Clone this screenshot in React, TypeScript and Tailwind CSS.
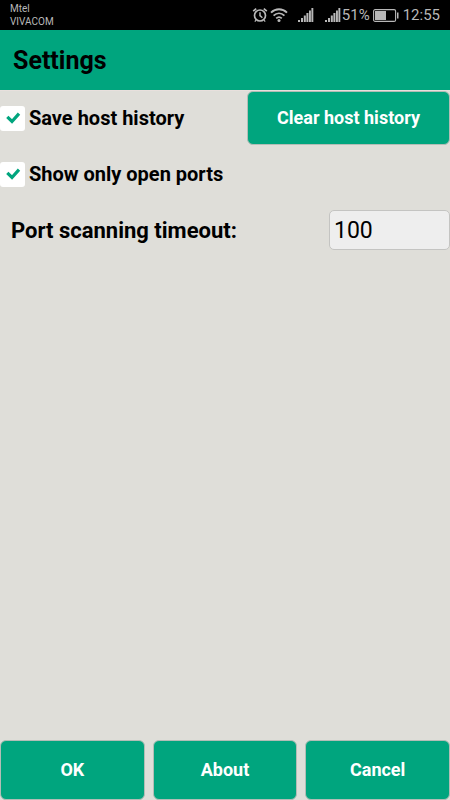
import { useState } from "react";

function AlarmIcon() {
  return (
    <svg width="16" height="16" viewBox="0 0 16 16" fill="none" stroke="#b8b8b8" aria-hidden="true">
      <circle cx="8" cy="8.5" r="5.5" strokeWidth="1.7" />
      <path d="M8 5.2v3.400l2.400 2.200" strokeWidth="1.500" />
      <path d="M1.200 4.200 4.200 1.600M14.800 4.200 11.800 1.600" strokeWidth="1.700" />
      <path d="M4 13.200 2.800 14.600M12 13.200l1.200 1.400" strokeWidth="1.200" />
    </svg>
  );
}

function WifiIcon() {
  return (
    <svg width="18" height="14" viewBox="0 0 18 14" fill="none" stroke="#b8b8b8" aria-hidden="true">
      <path d="M1 4.600C5.600 .2 12.400 .2 17 4.600" strokeWidth="1.900" />
      <path d="M3.600 7.600c3.200-3 7.600-3 10.800 0" strokeWidth="1.900" />
      <path d="M6.200 10.300c1.700-1.500 3.900-1.500 5.600 0" strokeWidth="1.800" />
      <circle cx="9" cy="12.400" r="1.500" fill="#b8b8b8" stroke="none" />
    </svg>
  );
}

function SignalIcon() {
  return (
    <svg width="16" height="14" viewBox="0 0 16 14" fill="#b8b8b8" aria-hidden="true">
      <rect x="0" y="12" width="2" height="2" />
      <rect x="3" y="10" width="2" height="4" />
      <rect x="5.800" y="7.500" width="2" height="6.500" />
      <rect x="8.400" y="5" width="2" height="9" />
      <rect x="11" y="2.500" width="1.900" height="11.500" />
      <rect x="13.400" y="0" width="1.900" height="14" />
    </svg>
  );
}

function BatteryIcon() {
  return (
    <svg width="26" height="13" viewBox="0 0 26 13" fill="none" aria-hidden="true">
      <rect x="0.600" y="0.600" width="22" height="11.800" rx="1.500" stroke="#b8b8b8" strokeWidth="1.100" />
      <rect x="2" y="2" width="11" height="9" fill="#b8b8b8" />
      <rect x="24" y="3.500" width="1.500" height="6" fill="#b8b8b8" />
    </svg>
  );
}

function StatusBar() {
  return (
    <div className="flex h-[30px] items-center justify-between bg-black px-[10px] text-[#b8b8b8]">
      <div className="text-[10px] leading-[13px]">
        <div>Mtel</div>
        <div>VIVACOM</div>
      </div>
      <div className="flex items-center">
        <AlarmIcon />
        <div className="ml-[2px] mr-[10px]">
          <WifiIcon />
        </div>
        <SignalIcon />
        <div className="ml-[11px] mr-px">
          <SignalIcon />
        </div>
        <span className="text-[15px]">51%</span>
        <div className="ml-[3px] mr-1">
          <BatteryIcon />
        </div>
        <span className="pt-px text-[15px]">12:55</span>
      </div>
    </div>
  );
}

const buttonClass =
  "cursor-pointer rounded-md border border-[#b3bdb6] bg-[#00a57e] pb-[2px] text-[18px] font-bold text-white";

function CheckRow({ id, label, defaultChecked }: { id: string; label: string; defaultChecked: boolean }) {
  const [checked, setChecked] = useState(defaultChecked);
  return (
    <div className="flex items-center gap-1">
      <span className="relative block size-[25px]">
        <input
          id={id}
          type="checkbox"
          checked={checked}
          onChange={(e) => setChecked(e.target.checked)}
          className="block size-[25px] appearance-none rounded-[3px] bg-white"
        />
        {checked && (
          <svg
            className="pointer-events-none absolute inset-0"
            width="25"
            height="25"
            viewBox="0 0 25 25"
            fill="none"
            aria-hidden="true"
          >
            <path d="M7.300 10.800 12 15.500 19 7.600" stroke="#00a57e" strokeWidth="3.200" />
          </svg>
        )}
      </span>
      <label htmlFor={id} className="text-[20px] leading-6 font-bold">
        {label}
      </label>
    </div>
  );
}

export default function App() {
  const [timeout, setTimeoutValue] = useState("100");
  return (
    <div className="flex min-h-screen flex-col bg-[#dfded9] font-[Roboto,sans-serif] text-black">
      <StatusBar />
      <header className="flex h-[61px] items-center border-b border-[#e8e0dd] bg-[#00a57e] pt-px pl-[13px]">
        <h1 className="text-[25px] font-bold">Settings</h1>
      </header>
      <main className="flex-1">
        <div className="flex h-[54px] items-stretch justify-between">
          <CheckRow id="save-history" label="Save host history" defaultChecked />
          <button type="button" className={buttonClass + " w-[203px]"}>
            Clear host history
          </button>
        </div>
        <div className="flex h-[58px] items-center">
          <CheckRow id="open-ports" label="Show only open ports" defaultChecked />
        </div>
        <div className="flex h-[54px] items-center justify-between pl-[11px]">
          <label htmlFor="scan-timeout" className="text-[22px] font-bold">
            Port scanning timeout:
          </label>
          <input
            id="scan-timeout"
            type="text"
            inputMode="numeric"
            value={timeout}
            onChange={(e) => setTimeoutValue(e.target.value)}
            className="h-10 w-[121px] rounded-[5px] border border-[#c4c4c2] bg-[#eeeeee] px-1 text-[23px]"
          />
        </div>
      </main>
      <footer className="grid h-[60px] grid-cols-3 gap-2">
        <button type="button" className={buttonClass}>
          OK
        </button>
        <button type="button" className={buttonClass}>
          About
        </button>
        <button type="button" className={buttonClass}>
          Cancel
        </button>
      </footer>
    </div>
  );
}
